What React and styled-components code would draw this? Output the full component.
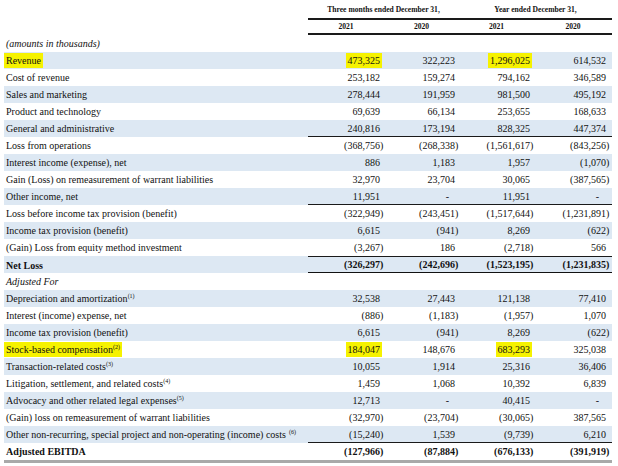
import React from "react";
import styled, { createGlobalStyle, css } from "styled-components";

const Global = createGlobalStyle`
  html, body { margin: 0; padding: 0; background: #ffffff; }
  body { font-family: "Liberation Serif", "Times New Roman", serif; color: #111; }
`;

const Sheet = styled.div`
  width: 608px;
  margin-left: 4px;
  display: flex;
  flex-direction: column;
  border-bottom: 3px solid #a9a9a9;
`;

const GRID = "304px 76px 75px 75px 78px";

const HeadRow = styled.div`
  display: grid;
  grid-template-columns: ${GRID};
  height: ${(p) => p.$h}px;
  align-items: center;
  font-size: 7.6px;
  font-weight: bold;
`;

const HeadCell = styled.div`
  grid-column: ${(p) => p.$span || "auto"};
  text-align: center;
  height: 100%;
  display: flex;
  align-items: center;
  justify-content: center;
  box-sizing: border-box;
  ${(p) => p.$rule && css`border-bottom: 2px solid #1a1a1a;`}
`;

const Row = styled.div`
  display: grid;
  grid-template-columns: ${GRID};
  height: 17px;
  background: ${(p) => (p.$shade ? "#dde8f3" : "#ffffff")};
  font-size: 10px;
  font-weight: ${(p) => (p.$bold ? "bold" : "normal")};
  font-style: ${(p) => (p.$italic ? "italic" : "normal")};
`;

const Label = styled.div`
  display: flex;
  align-items: center;
  white-space: nowrap;
`;

const Num = styled.div`
  display: flex;
  align-items: center;
  justify-content: flex-end;
  box-sizing: border-box;
  padding-right: 2px;
  white-space: nowrap;
  &:last-child { padding-right: 4px; }
  ${(p) => p.$top === 1 && css`border-top: 1px solid #1a1a1a;`}
  ${(p) => p.$top === 2 && css`border-top: 2px solid #1a1a1a;`}
  ${(p) => p.$bottom === 1 && css`border-bottom: 1px solid #1a1a1a;`}
  ${(p) => p.$bottom === 2 && css`border-bottom: 2px solid #111;`}
`;

const Text = styled.span`
  display: inline-block;
  height: 15px;
  line-height: 15px;
  padding: 0 2px;
  background: ${(p) => (p.$hl ? "#f6f200" : "transparent")};
`;

const Hang = styled.span`
  margin-right: -3.3px;
`;

const Dash = styled.span`
  margin-right: ${(p) => p.$m}px;
`;

const Sup = styled.sup`
  font-size: 6px;
  line-height: 0;
  vertical-align: 4px;
  margin-left: ${(p) => (p.$gap ? 3 : 0)}px;
`;

const rows = [
  { label: "Revenue", v: ["473,325", "322,223", "1,296,025", "614,532"], hlLabel: true, hl: [0, 2] },
  { label: "Cost of revenue", v: ["253,182", "159,274", "794,162", "346,589"] },
  { label: "Sales and marketing", v: ["278,444", "191,959", "981,500", "495,192"] },
  { label: "Product and technology", v: ["69,639", "66,134", "253,655", "168,633"] },
  { label: "General and administrative", v: ["240,816", "173,194", "828,325", "447,374"], bottom: 1 },
  { label: "Loss from operations", v: ["(368,756)", "(268,338)", "(1,561,617)", "(843,256)"] },
  { label: "Interest income (expense), net", v: ["886", "1,183", "1,957", "(1,070)"] },
  { label: "Gain (Loss) on remeasurement of warrant liabilities", v: ["32,970", "23,704", "30,065", "(387,565)"] },
  { label: "Other income, net", v: ["11,951", "-", "11,951", "-"], bottom: 1 },
  { label: "Loss before income tax provision (benefit)", v: ["(322,949)", "(243,451)", "(1,517,644)", "(1,231,891)"] },
  { label: "Income tax provision (benefit)", v: ["6,615", "(941)", "8,269", "(622)"] },
  { label: "(Gain) Loss from equity method investment", v: ["(3,267)", "186", "(2,718)", "566"] },
  { label: "Net Loss", v: ["(326,297)", "(242,696)", "(1,523,195)", "(1,231,835)"], bold: true, top: 1, bottom: 2 },
  { label: "Adjusted For", v: ["", "", "", ""], italic: true },
  { label: "Depreciation and amortization", sup: "(1)", v: ["32,538", "27,443", "121,138", "77,410"] },
  { label: "Interest (income) expense, net", v: ["(886)", "(1,183)", "(1,957)", "1,070"] },
  { label: "Income tax provision (benefit)", v: ["6,615", "(941)", "8,269", "(622)"] },
  { label: "Stock-based compensation", sup: "(2)", v: ["184,047", "148,676", "683,293", "325,038"], hlLabel: true, hl: [0, 2] },
  { label: "Transaction-related costs", sup: "(3)", v: ["10,055", "1,914", "25,316", "36,406"] },
  { label: "Litigation, settlement, and related costs", sup: "(4)", v: ["1,459", "1,068", "10,392", "6,839"] },
  { label: "Advocacy and other related legal expenses", sup: "(5)", v: ["12,713", "-", "40,415", "-"] },
  { label: "(Gain) loss on remeasurement of warrant liabilities", v: ["(32,970)", "(23,704)", "(30,065)", "387,565"] },
  { label: "Other non-recurring, special project and non-operating (income) costs", sup: "(6)", supGap: true, v: ["(15,240)", "1,539", "(9,739)", "6,210"], bottom: 1 },
  { label: "Adjusted EBITDA", v: ["(127,966)", "(87,884)", "(676,133)", "(391,919)"], bold: true },
];

function Value({ value, hl, col }) {
  if (value === "") return null;
  if (value === "-") return <Dash $m={col === 3 ? 9 : 8}>-</Dash>;
  if (value.endsWith(")")) {
    return (
      <Text $hl={hl}>
        {value.slice(0, -1)}
        <Hang>)</Hang>
      </Text>
    );
  }
  return <Text $hl={hl}>{value}</Text>;
}

export default function App() {
  return (
    <>
      <Global />
      <Sheet>
        <HeadRow $h={20}>
          <div />
          <HeadCell $span="2 / 4" $rule>Three months ended December 31,</HeadCell>
          <HeadCell $span="4 / 6" $rule>Year ended December 31,</HeadCell>
        </HeadRow>
        <HeadRow $h={15}>
          <div />
          <HeadCell $rule>2021</HeadCell>
          <HeadCell $rule>2020</HeadCell>
          <HeadCell $rule>2021</HeadCell>
          <HeadCell $rule>2020</HeadCell>
        </HeadRow>
        <Row $italic>
          <Label>
            <Text>(amounts in thousands)</Text>
          </Label>
        </Row>
        {rows.map((r, i) => (
          <Row key={i} $shade={i % 2 === 0} $bold={r.bold} $italic={r.italic}>
            <Label>
              <Text $hl={r.hlLabel}>
                {r.label}
                {r.sup && <Sup $gap={r.supGap}>{r.sup}</Sup>}
              </Text>
            </Label>
            {r.v.map((val, c) => (
              <Num key={c} $top={r.top} $bottom={r.bottom}>
                <Value value={val} col={c} hl={r.hl && r.hl.includes(c)} />
              </Num>
            ))}
          </Row>
        ))}
      </Sheet>
    </>
  );
}
